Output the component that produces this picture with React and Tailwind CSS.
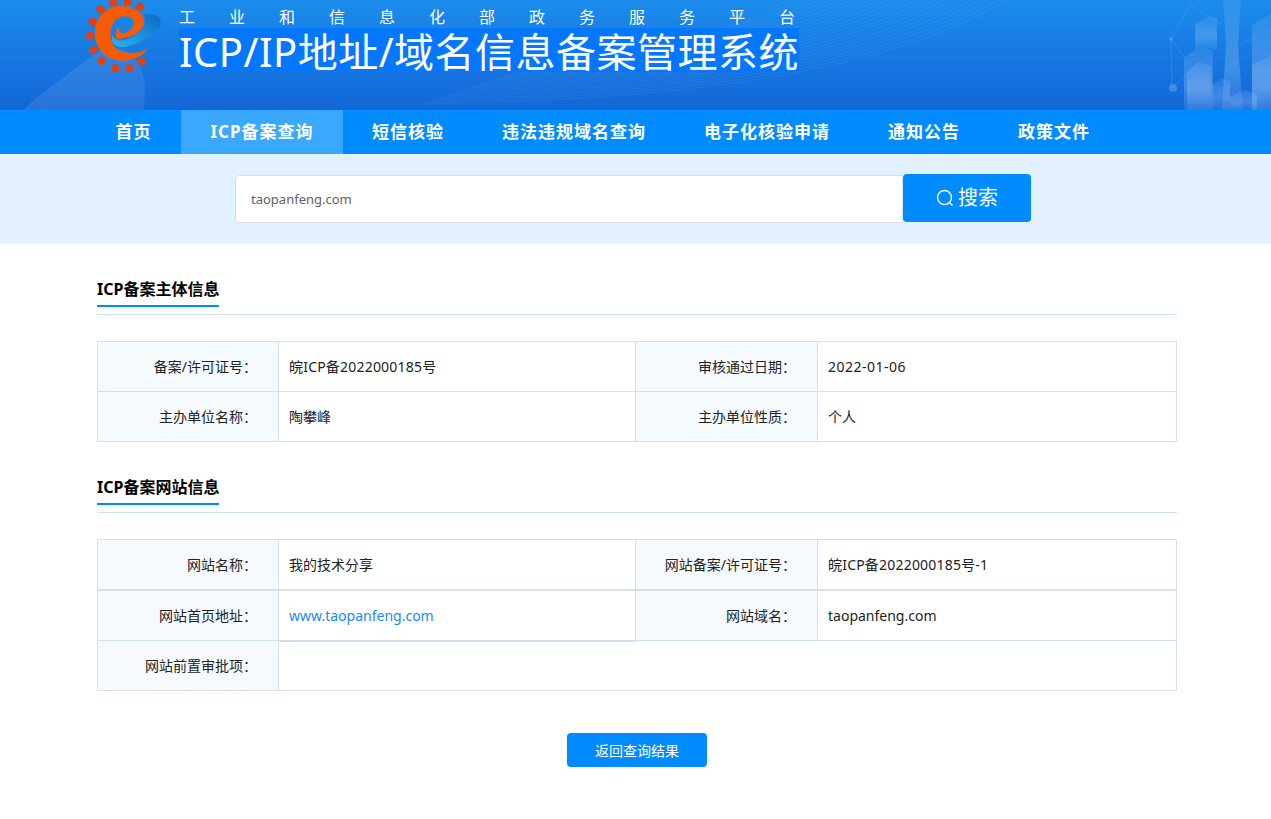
const FONT = { fontFamily: '"Noto Sans", "Noto Sans CJK SC", sans-serif' };

const NAV = ['首页', 'ICP备案查询', '短信核验', '违法违规域名查询', '电子化核验申请', '通知公告', '政策文件'];
const GEARS = [[100, 8, 5], [143, 5, -5], [180, 20, 25], [62, 28, -30], [38, 65, -15], [30, 108, 0], [40, 150, 25], [65, 183, 35], [107, 205, 5], [148, 205, -5], [185, 185, -25]];
const COLS = 'grid-cols-[181px_357px_182px_1fr]';

function Logo() {
  return (
    <svg className="absolute left-[80px] top-0 h-[80px] w-[90px]" viewBox="0 0 270 240">
      <defs>
        <linearGradient id="swoosh" x1="0" y1="1" x2="1" y2="0">
          <stop offset="0" stopColor="#2bb4ee" />
          <stop offset="1" stopColor="#0f68c4" />
        </linearGradient>
      </defs>
      {GEARS.map(([x, y, r], i) => (
        <rect key={i} x={x - 11} y={y - 11} width="22" height="22" fill="#e2400f" transform={`rotate(${r} ${x} ${y})`} />
      ))}
      <path d="M190 43C225 40 245 50 242 70C238 95 195 125 140 140C110 148 90 130 97 105C105 125 125 125 150 115C185 100 205 70 190 43Z" fill="url(#swoosh)" />
      <path d="M205 145C175 190 100 195 65 155C30 115 40 50 90 25C130 8 185 25 192 60C197 95 150 115 110 118C105 105 108 90 118 78C115 95 120 102 130 100C150 95 172 75 155 55C145 45 115 45 100 70C85 95 90 135 115 150C145 165 180 160 205 145Z" fill="#f55a05" />
    </svg>
  );
}

function HeaderArt() {
  const waves = Array.from({ length: 24 }, (_, i) => i);
  return (
    <svg className="absolute inset-0 h-[110px] w-[1271px]" viewBox="0 0 1271 110">
      <defs>
        <linearGradient id="tower" x1="0" y1="0" x2="0" y2="1">
          <stop offset="0" stopColor="#a8d0f8" stopOpacity="0.12" />
          <stop offset="0.6" stopColor="#a8d0f8" stopOpacity="0.3" />
          <stop offset="1" stopColor="#a8d0f8" stopOpacity="0.1" />
        </linearGradient>
      </defs>
      <path d="M23 110C50 85 72 72 90 57C115 40 140 48 145 85L144 110Z" fill="#fff" opacity="0.09" />
      {waves.map((i) => (
        <path key={i} d={`M${420 + i * 6} ${104 - i * 2}C${600 + i * 8} ${100 - i * 3} ${860 - i * 4} ${90 - i * 4} ${1010 - i * 9} -2`} fill="none" stroke="#7cc0f5" strokeWidth="0.6" opacity="0.2" />
      ))}
      <g fill="url(#tower)">
        <path d="M1184 58L1200 46L1213 50L1213 110L1184 110Z" />
        <path d="M1187 72L1198 62L1211 66L1212 110L1187 110Z" />
        <path d="M1195 24L1210 16L1217 18L1217 50L1200 46L1195 50Z" />
        <path d="M1223 0L1241 0L1238 45L1243 110L1222 110L1226 45Z" />
        <path d="M1212 85L1222 78L1230 82L1230 110L1212 110Z" />
        <path d="M1230 97L1245 90L1257 94L1257 110L1230 110Z" />
        <path d="M1252 25L1271 14L1271 110L1252 110Z" />
        <path d="M1252 65L1271 55L1271 110L1252 110Z" />
      </g>
      <g stroke="#8fc0f5" strokeWidth="0.6" opacity="0.3" fill="none">
        <path d="M1171 39L1185 58M1171 39L1172 88M1172 88L1190 72M1171 39L1190 5M1190 5L1222 25M1240 45L1271 30" />
      </g>
      <circle cx="1173" cy="88" r="4" fill="#8fc0f5" opacity="0.35" />
      <circle cx="1171" cy="39" r="2" fill="#8fc0f5" opacity="0.35" />
    </svg>
  );
}

function Section({ title }) {
  return (
    <div className="border-b border-[#c7e0f5]">
      <h2 className="mb-[7px] inline-block border-b-2 border-[#008cff] pb-[5px] text-[16px] leading-[22px] font-bold text-black">{title}</h2>
    </div>
  );
}

function Label({ children }) {
  return <div className="flex items-center justify-end border-r border-[#d9dfe6] bg-[#f5faff] pr-[21px] text-[14px] text-[#222]">{children}</div>;
}

function Value({ children, className = 'text-[#222]' }) {
  return <div className={`flex items-center pl-[10px] text-[14px] ${className}`}>{children}</div>;
}

export default function App() {
  return (
    <div className="min-h-[819px] bg-white" style={FONT}>
      <header className="relative h-[110px] overflow-hidden bg-gradient-to-b from-[#1c8cec] to-[#1466d8]">
        <HeaderArt />
        <Logo />
        <div className="relative pl-[179px] text-white">
          <p className="pt-[6px] text-[16px] leading-[22px] tracking-[34px] whitespace-nowrap">工业和信息化部政务服务平台</p>
          <h1 className="h-[44px] w-fit bg-[#0577fd] pt-[4px] text-[40px] leading-[40px] tracking-[0.5px] whitespace-nowrap">ICP/IP地址/域名信息备案管理系统</h1>
        </div>
      </header>

      <nav className="flex h-[44px] bg-[#008cff] pl-[86px]">
        {NAV.map((item, i) => (
          <a
            key={item}
            className={`flex items-center justify-center px-[29px] text-[17px] font-bold tracking-[1px] text-white ${i === 0 ? 'w-[95px]' : ''} ${i === 1 ? 'w-[162px] bg-[#3ba8ff]' : ''}`}
          >
            {item}
          </a>
        ))}
      </nav>

      <div className="flex h-[90px] items-center justify-center bg-[#e3f1ff] pr-[5px]">
        <div className="flex h-[48px] w-[668px] items-center rounded-l border border-[#dcdfe6] bg-white pt-px pl-[15px] text-[13px] text-[#606266]">taopanfeng.com</div>
        <button className="-mt-[2px] flex h-[48px] w-[128px] items-center justify-center gap-[4px] rounded bg-[#008cff] text-[20px] text-white">
          <svg width="18" height="18" viewBox="0 0 18 18" fill="none" stroke="#fff" strokeWidth="1.4">
            <circle cx="8.5" cy="8.5" r="7" />
            <path d="M13.5 13.5L16.5 16.5" />
          </svg>
          搜索
        </button>
      </div>

      <main className="ml-[97px] w-[1080px] pt-[33px]">
        <Section title="ICP备案主体信息" />
        <div className="mt-[26px] border border-[#d9dfe6]">
          <div className={`grid h-[50px] ${COLS} border-b border-[#d9dfe6]`}>
            <Label>备案/许可证号：</Label>
            <Value className="border-r border-[#d9dfe6] tracking-[0.2px] text-[#222]">皖ICP备2022000185号</Value>
            <Label>审核通过日期：</Label>
            <Value className="tracking-[0.5px] text-[#222]">2022-01-06</Value>
          </div>
          <div className={`grid h-[49px] ${COLS}`}>
            <Label>主办单位名称：</Label>
            <Value className="border-r border-[#d9dfe6] text-[#222]">陶攀峰</Value>
            <Label>主办单位性质：</Label>
            <Value>个人</Value>
          </div>
        </div>

        <div className="mt-[33px]">
          <Section title="ICP备案网站信息" />
        </div>
        <div className="mt-[26px] border border-[#d9dfe6]">
          <div className={`grid h-[51px] ${COLS} border-b-2 border-[#d9dfe6]`}>
            <Label>网站名称：</Label>
            <Value className="border-r border-[#d9dfe6] text-[#222]">我的技术分享</Value>
            <Label>网站备案/许可证号：</Label>
            <Value className="tracking-[0.2px] text-[#222]">皖ICP备2022000185号-1</Value>
          </div>
          <div className={`relative grid h-[50px] ${COLS} border-b border-[#cfe0f0]`}>
            <Label>网站首页地址：</Label>
            <Value className="border-r border-[#d9dfe6] text-[#1a86ff]">www.taopanfeng.com</Value>
            <Label>网站域名：</Label>
            <Value>taopanfeng.com</Value>
            <span className="absolute -bottom-[2px] left-[181px] h-px w-[357px] bg-[#cfe0f0]" />
          </div>
          <div className="grid h-[49px] grid-cols-[181px_1fr]">
            <Label>网站前置审批项：</Label>
            <Value />
          </div>
        </div>

        <div className="flex justify-center pt-[42px]">
          <button className="h-[34px] w-[140px] rounded bg-[#008cff] text-[14px] text-white">返回查询结果</button>
        </div>
      </main>
    </div>
  );
}
